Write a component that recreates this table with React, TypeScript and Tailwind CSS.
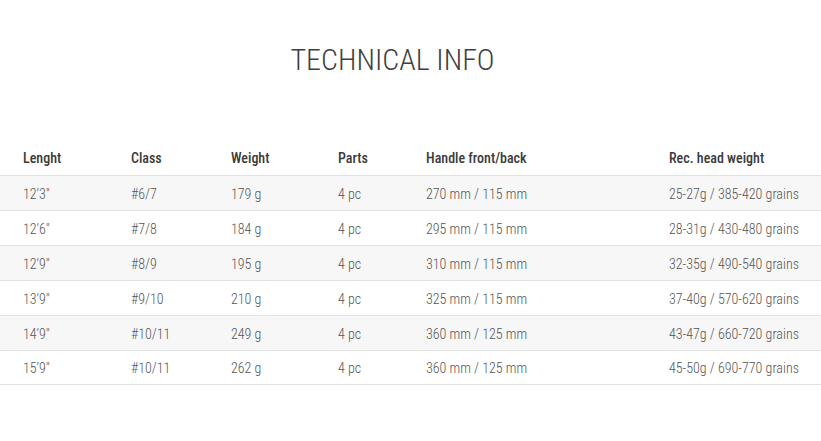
const rows = [
  ['12\u20193"', '#6/7', '179 g', '4 pc', '270 mm / 115 mm', '25-27g / 385-420 grains'],
  ['12\u20196"', '#7/8', '184 g', '4 pc', '295 mm / 115 mm', '28-31g / 430-480 grains'],
  ['12\u20199"', '#8/9', '195 g', '4 pc', '310 mm / 115 mm', '32-35g / 490-540 grains'],
  ['13\u20199"', '#9/10', '210 g', '4 pc', '325 mm / 115 mm', '37-40g / 570-620 grains'],
  ['14\u20199"', '#10/11', '249 g', '4 pc', '360 mm / 125 mm', '43-47g / 660-720 grains'],
  ['15\u20199"', '#10/11', '262 g', '4 pc', '360 mm / 125 mm', '45-50g / 690-770 grains'],
];

const headers = ['Lenght', 'Class', 'Weight', 'Parts', 'Handle front/back', 'Rec. head weight'];

const cols = 'grid grid-cols-[108px_100px_107px_88px_243px_1fr] pl-[23px] pt-[2px] items-center';

export default function App() {
  return (
    <div className="w-[821px] h-[441px] bg-white text-[#555] font-['Roboto',sans-serif] font-stretch-condensed">
      <h1 className="pt-[42px] pr-[36px] text-center text-[30px] leading-[36px] tracking-normal text-[#3f3f3f] font-light">
        TECHNICAL INFO
      </h1>
      <div className="mt-[62px]">
        <div className={`${cols} h-[35px] text-[14px] font-medium text-[#3a3a3a]`}>
          {headers.map((h) => (
            <div key={h}>{h}</div>
          ))}
        </div>
        {rows.map((r, i) => (
          <div
            key={i}
            className={`${cols} h-[35px] border-t border-[#e2e2e2] text-[14px] font-light ${
              i % 2 === 0 ? 'bg-[#f7f7f7]' : 'bg-white'
            } ${i === rows.length - 1 ? 'border-b' : ''}`}
          >
            {r.map((c, j) => (
              <div key={j}>{c}</div>
            ))}
          </div>
        ))}
      </div>
    </div>
  );
}
